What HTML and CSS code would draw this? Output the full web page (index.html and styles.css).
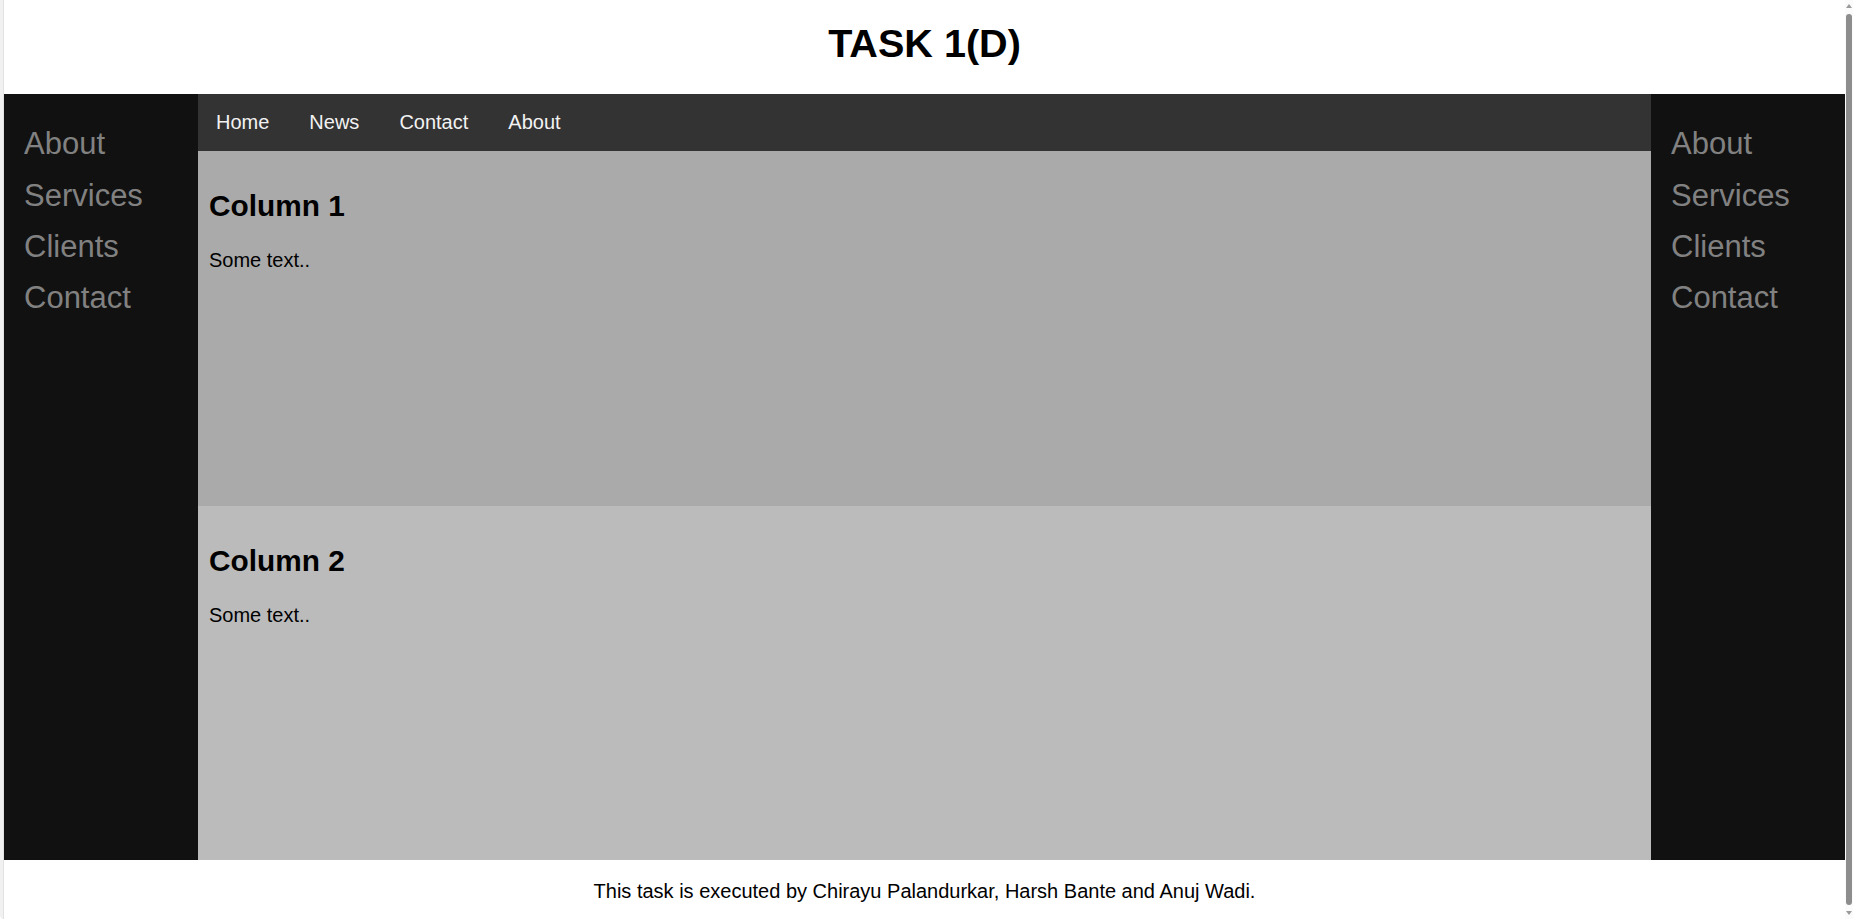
FILE: index.html
```html
<!DOCTYPE html>
<html lang="en">
<head>
<meta charset="utf-8">
<title>Task 1(D)</title>
<link rel="stylesheet" href="styles.css">
</head>
<body>
<div class="window">
  <div class="frame-left"></div>
  <div class="page">
    <header class="header">
      <h1>TASK 1(D)</h1>
    </header>
    <div class="main">
      <nav class="sidenav">
        <a href="#">About</a>
        <a href="#">Services</a>
        <a href="#">Clients</a>
        <a href="#">Contact</a>
      </nav>
      <div class="center">
        <div class="topnav">
          <a href="#">Home</a>
          <a href="#">News</a>
          <a href="#">Contact</a>
          <a href="#">About</a>
        </div>
        <div class="column col1">
          <h2>Column 1</h2>
          <p>Some text..</p>
        </div>
        <div class="column col2">
          <h2>Column 2</h2>
          <p>Some text..</p>
        </div>
      </div>
      <nav class="sidenav">
        <a href="#">About</a>
        <a href="#">Services</a>
        <a href="#">Clients</a>
        <a href="#">Contact</a>
      </nav>
    </div>
    <footer class="footer">
      <p>This task is executed by Chirayu Palandurkar, Harsh Bante and Anuj Wadi.</p>
    </footer>
  </div>
  <div class="scrollbar">
    <div class="arrow-up"></div>
    <div class="thumb"></div>
    <div class="arrow-down"></div>
  </div>
</div>
</body>
</html>
```
FILE: styles.css
```css
html, body {
  margin: 0;
  padding: 0;
  height: 919px;
  overflow: hidden;
  background: #ffffff;
}

body {
  font-family: "Liberation Sans", Arial, sans-serif;
  color: #000;
}

.window {
  display: flex;
  height: 919px;
}

.frame-left {
  width: 3px;
  flex: none;
  background: #f1f1f1;
  border-right: 1px solid #e2e2e2;
  border-bottom-left-radius: 8px;
}

.page {
  width: 1841px;
  flex: none;
  display: flex;
  flex-direction: column;
}

.header {
  height: 94px;
  box-sizing: border-box;
  padding-top: 20px;
  text-align: center;
}

.header h1 {
  margin: 0;
  font-size: 39.6px;
  font-weight: bold;
  line-height: 46px;
}

.main {
  display: flex;
  height: 766px;
}

.sidenav {
  width: 194px;
  flex: none;
  background: #111111;
  padding-top: 24px;
  box-sizing: border-box;
  display: flex;
  flex-direction: column;
}

.sidenav a {
  display: block;
  padding: 7.2px 9.6px 7.2px 20px;
  font-size: 31px;
  line-height: 37px;
  color: #818181;
  text-decoration: none;
}

.center {
  flex: 1;
  display: flex;
  flex-direction: column;
}

.topnav {
  background: #333333;
  height: 57px;
  box-sizing: border-box;
  padding-bottom: 2px;
  display: flex;
  align-items: center;
}

.topnav a {
  color: #f2f2f2;
  text-decoration: none;
  font-size: 20px;
  line-height: 22px;
  padding: 0 20px;
}

.topnav a:first-child {
  padding-left: 18px;
}

.column {
  height: 354.5px;
  box-sizing: border-box;
  padding: 12px 12px 12px 11px;
}

.col1 { background: #aaaaaa; }
.col2 { background: #bbbbbb; }

.column h2 {
  margin: 26px 0 0;
  font-size: 29.8px;
  line-height: 34px;
  font-weight: bold;
}

.column p {
  margin: 26px 0 0;
  font-size: 20px;
  line-height: 22px;
}

.footer {
  height: 59px;
  display: flex;
  align-items: center;
  justify-content: center;
  padding-top: 2px;
  box-sizing: border-box;
}

.footer p {
  margin: 0;
  font-size: 20px;
  line-height: 22px;
  color: #000;
}

.scrollbar {
  width: 8px;
  flex: none;
  background: #fbfbfb;
  display: flex;
  flex-direction: column;
  align-items: center;
}

.arrow-up {
  width: 0;
  height: 0;
  margin-top: 4px;
  border-left: 3px solid transparent;
  border-right: 3px solid transparent;
  border-bottom: 4px solid #9a9a9a;
}

.thumb {
  width: 6px;
  flex: 1;
  margin: 6px 0;
  background: #8d8d8d;
  border-radius: 3px;
}

.arrow-down {
  width: 0;
  height: 0;
  margin-bottom: 4px;
  border-left: 3px solid transparent;
  border-right: 3px solid transparent;
  border-top: 4px solid #9a9a9a;
}
```
